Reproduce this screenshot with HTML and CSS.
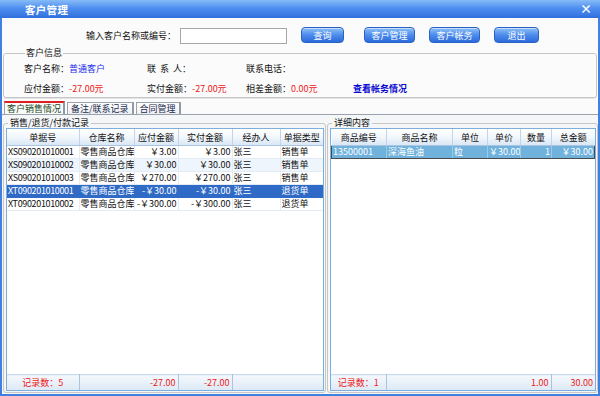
FILE: index.html
```html
<!DOCTYPE html>
<html lang="zh-CN">
<head>
  <meta charset="UTF-8">
  <title>客户管理</title>
  <link rel="stylesheet" href="styles.css">
</head>
<body>
  <div class="window">
    <div class="titlebar">
      <span class="title">客户管理</span>
      <span class="close">×</span>
    </div>

    <!-- search bar -->
    <div class="search">
      <label class="search-label">输入客户名称或编号：</label>
      <input class="search-input" type="text">
      <button class="btn btn-query">查询</button>
      <button class="btn btn-wide">客户管理</button>
      <button class="btn btn-wide">客户帐务</button>
      <button class="btn btn-exit">退出</button>
    </div>

    <!-- customer info -->
    <fieldset class="info">
      <legend>客户信息</legend>
      <div class="info-grid">
        <span>客户名称：<em class="blue">普通客户</em></span>
        <span>联&nbsp;&nbsp;系&nbsp;&nbsp;人：</span>
        <span>联系电话：</span>
        <span></span>
        <span>应付金额：<em class="red">-27.00元</em></span>
        <span>实付金额：<em class="red">-27.00元</em></span>
        <span>相差金额：<em class="red">0.00元</em></span>
        <a class="link">查看帐务情况</a>
      </div>
    </fieldset>

    <div class="tabs">
      <span class="tab active">客户销售情况</span>
      <span class="tab">备注/联系记录</span>
      <span class="tab">合同管理</span>
    </div>

    <div class="panel">
      <fieldset class="group group-left">
        <legend>销售/退货/付款记录</legend>
        <div class="grid">
          <table class="data">
            <colgroup>
              <col style="width:72px"><col style="width:55px"><col style="width:44px">
              <col style="width:54px"><col style="width:48px"><col>
            </colgroup>
            <thead>
              <tr><th>单据号</th><th>仓库名称</th><th>应付金额</th><th>实付金额</th><th>经办人</th><th>单据类型</th></tr>
            </thead>
            <tbody>
              <tr><td class="code">XS090201010001</td><td>零售商品仓库</td><td class="num">￥3.00</td><td class="num">￥3.00</td><td>张三</td><td>销售单</td></tr>
              <tr class="alt"><td class="code">XS090201010002</td><td>零售商品仓库</td><td class="num">￥30.00</td><td class="num">￥30.00</td><td>张三</td><td>销售单</td></tr>
              <tr><td class="code">XS090201010003</td><td>零售商品仓库</td><td class="num">￥270.00</td><td class="num">￥270.00</td><td>张三</td><td>销售单</td></tr>
              <tr class="selected"><td class="code">XT090201010001</td><td>零售商品仓库</td><td class="num">-￥30.00</td><td class="num">-￥30.00</td><td>张三</td><td>退货单</td></tr>
              <tr><td class="code">XT090201010002</td><td>零售商品仓库</td><td class="num">-￥300.00</td><td class="num">-￥300.00</td><td>张三</td><td>退货单</td></tr>
            </tbody>
          </table>
          <div class="grid-fill"></div>
          <table class="foot">
            <colgroup>
              <col style="width:72px"><col style="width:99px"><col style="width:54px"><col>
            </colgroup>
            <tr><td class="count">记录数：5</td><td class="num">-27.00</td><td class="num">-27.00</td><td></td></tr>
          </table>
        </div>
      </fieldset>

      <fieldset class="group group-right">
        <legend>详细内容</legend>
        <div class="grid">
          <table class="data">
            <colgroup>
              <col style="width:55px"><col style="width:66px"><col style="width:35px">
              <col style="width:33px"><col style="width:31px"><col>
            </colgroup>
            <thead>
              <tr><th>商品编号</th><th>商品名称</th><th>单位</th><th>单价</th><th>数量</th><th>总金额</th></tr>
            </thead>
            <tbody>
              <tr class="picked"><td>13500001</td><td>深海鱼油</td><td>粒</td><td class="num">￥30.00</td><td class="num">1</td><td class="num">￥30.00</td></tr>
            </tbody>
          </table>
          <div class="grid-fill"></div>
          <table class="foot">
            <colgroup>
              <col style="width:55px"><col style="width:165px"><col>
            </colgroup>
            <tr><td class="count">记录数：1</td><td class="num">1.00</td><td class="num">30.00</td></tr>
          </table>
        </div>
      </fieldset>
    </div>
  </div>
</body>
</html>
```

FILE: styles.css
```css
body {
  margin: 0;
  font-family: "Noto Sans CJK SC", "DejaVu Sans", sans-serif;
  font-size: 9px;
  color: #111;
  background: #fff;
}

.window {
  width: 600px;
  height: 396px;
  box-sizing: border-box;
  display: flex;
  flex-direction: column;
  background: #fbfbfb;
  border: 2px solid #3f80e0;
  border-top: none;
}

.titlebar {
  height: 18px;
  flex: none;
  margin: 0 -2px;
  display: flex;
  align-items: center;
  justify-content: space-between;
  padding: 0 8px 0 25px;
  background: linear-gradient(#86bbf7, #4f8ff0 45%, #2f6fdd);
  color: #fff;
}

.title {
  font-size: 10.5px;
  font-weight: bold;
  letter-spacing: 0.3px;
}

.close {
  font-size: 12px;
  font-weight: bold;
  line-height: 1;
}

/* search row */
.search {
  flex: none;
  display: flex;
  align-items: center;
  height: 16px;
  padding: 9px 0 0 84px;
}

.search-label {
  margin-right: 4px;
}

.search-input {
  width: 107px;
  height: 16px;
  box-sizing: border-box;
  border: 1px solid #a7a7a7;
  margin: 1px 14px 0 0;
  padding: 0;
  background: #fff;
}

.btn {
  height: 16px;
  border: 1px solid #2a62c4;
  border-radius: 4px;
  padding: 0;
  font: inherit;
  color: #fff;
  background: linear-gradient(#8ec0f8, #4d8ceb 50%, #2c6bdb);
  box-shadow: inset 0 1px 0 rgba(255,255,255,0.5);
}

.btn-query { width: 43px; margin-right: 20px; }
.btn-wide { width: 51px; margin-right: 14px; }
.btn-exit { width: 45px; }

/* customer info */
.info {
  flex: none;
  margin: 5px 1px 0;
  padding: 5px 0 5px 20px;
  height: 38px;
  border: 1px solid #c6c6c6;
  border-radius: 3px;
  box-shadow: 0 1px 0 #e4e4e4;
}

.info legend {
  padding: 0 1px;
  margin-left: 1px;
  line-height: 10px;
}

.info-grid {
  display: grid;
  grid-template-columns: 123px 99px 107px auto;
  row-gap: 9px;
  line-height: 11px;
}

em { font-style: normal; }
.blue { color: #1c2fe8; }
.red { color: #f01818; }

.link {
  color: #0a0ad0;
  font-weight: bold;
}

/* tabs */
.tabs {
  flex: none;
  display: flex;
  margin: 3px 0 0 2px;
  height: 13px;
  align-items: flex-end;
}

.tab {
  line-height: 11px;
  padding: 0 3px;
  margin-right: 2px;
  border: 1px solid #9aa3ad;
  border-bottom: none;
  border-right: 2px solid #8f9aa6;
  background: linear-gradient(#ffffff, #eceff2);
  color: #1c2c4c;
}

.tab.active {
  border-top: 2px solid #e02020;
  color: #1a4a1a;
  background: #fbfbfb;
  padding: 0 2px;
}

/* tab panel */
.panel {
  flex: 1;
  display: flex;
  gap: 1px;
  padding: 3px 0 1px 1px;
  border-top: 1px solid #9aa3ad;
  background: #f4f6f8;
}

.group {
  margin: 0;
  padding: 0 1px 1px 2px;
  border: 1px solid #c6c6c6;
  border-radius: 3px;
  display: flex;
  min-width: 0;
}

.group legend {
  line-height: 10px;
  padding: 0 2px;
  margin-left: 2px;
}

.group-left { width: 318px; }
.group-right { flex: 1; }

.grid {
  flex: 1;
  display: flex;
  flex-direction: column;
  border: 1px solid #7eaedb;
  background: #fff;
}

.grid-fill {
  flex: 1;
}

table {
  border-collapse: collapse;
  table-layout: fixed;
  width: 100%;
}

.data th {
  height: 16px;
  padding: 0;
  font-weight: normal;
  background: linear-gradient(#ffffff, #f2f7fc 50%, #d9e7f5);
  border-right: 1px solid #c3d4e8;
  border-bottom: 1px solid #a9c5e3;
}

.data td {
  height: 12px;
  padding: 0 1px;
  line-height: 12px;
  white-space: nowrap;
  overflow: hidden;
  border-right: 1px solid #e3ebf4;
  border-bottom: 1px solid #e3ebf4;
}

.data td.code {
  letter-spacing: -0.35px;
}

.data th:last-child,
.data td:last-child {
  border-right: none;
}

.num {
  text-align: right;
}

.alt td {
  background: #eef5fc;
}

.selected td {
  background: #2f6ac6;
  color: #fff;
  border-color: #2f6ac6;
}

.picked td {
  background: #70b2dc;
  color: #fff;
  border-top: 1px solid #4a4a4a;
  border-bottom: 1px solid #4a4a4a;
  border-right: 1px solid #9ccbe8;
}

.picked td:first-child { border-left: 1px solid #4a4a4a; }
.picked td:last-child { border-right: 1px solid #4a4a4a; }

.foot td {
  height: 15px;
  padding: 0 2px;
  color: #f01818;
  background: linear-gradient(#f4f8fc, #dce9f6);
  border-top: 1px solid #c9dbee;
  border-right: 1px solid #a9c3e0;
}

.foot td:last-child {
  border-right: none;
}

.foot .count {
  text-align: center;
}
```
